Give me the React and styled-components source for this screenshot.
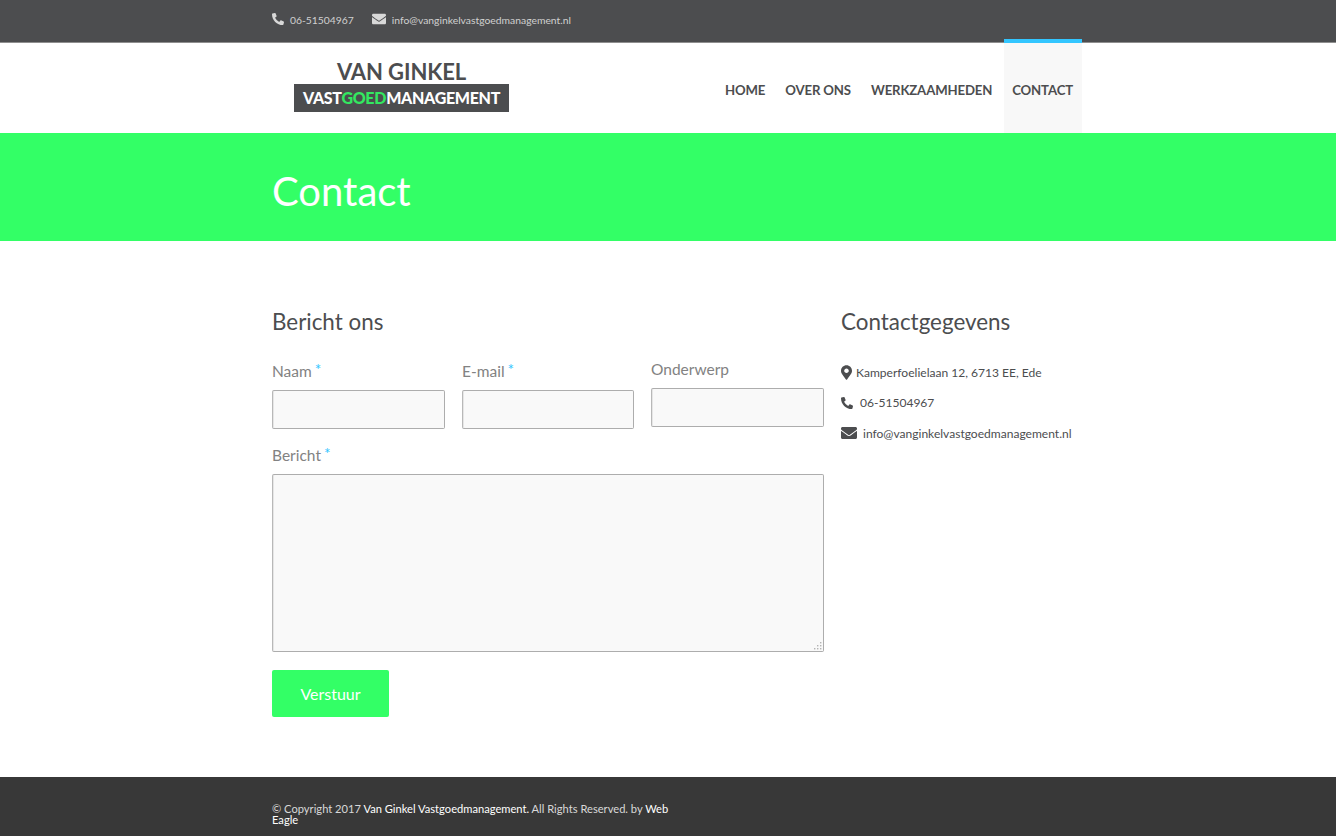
import React from 'react';
import styled, { createGlobalStyle } from 'styled-components';
import { FaPhoneAlt, FaEnvelope, FaMapMarkerAlt } from 'react-icons/fa';

const Global = createGlobalStyle`
  html, body { margin: 0; padding: 0; background: #fff; }
  body { font-family: Lato, "Open Sans", sans-serif; color: #4c4d4f; }
  * { box-sizing: border-box; }
`;
const Page = styled.div`
  min-height: 836px;
  display: flex;
  flex-direction: column;
`;
const Container = styled.div`
  width: 812px;
  margin-left: 272px;
`;
const TopBar = styled.div`
  height: 43px;
  background: #4c4d4f;
  border-bottom: 1px solid #8f8f8f;
`;
const TopInner = styled(Container)`
  display: flex;
  align-items: center;
  height: 39px;
  gap: 18px;
  font-size: 10.35px;
  color: #d0d0d0;
`;
const TopItem = styled.span`
  display: inline-flex;
  align-items: center;
  gap: ${p => p.$gap}px;
  svg { color: #d8d8d8; position: relative; top: -1px; }
`;
const Header = styled.header`
  height: 90px;
  background: #fff;
`;
const HeaderInner = styled(Container)`
  display: flex;
  justify-content: space-between;
  height: 90px;
`;
const Logo = styled.div`
  width: 215px;
  margin: 17px 0 0 22px;
  display: flex;
  flex-direction: column;
  align-items: center;
`;
const LogoTop = styled.div`
  font-size: 22px;
  font-weight: 700;
  line-height: 23px;
  height: 24px;
  color: #4c4d4f;
  letter-spacing: -0.1px;
`;
const LogoBar = styled.div`
  width: 215px;
  height: 28px;
  background: #4c4d4f;
  color: #fff;
  font-size: 16px;
  font-weight: 900;
  line-height: 28px;
  text-align: center;
  letter-spacing: -0.3px;
  white-space: nowrap;
  span { color: #33e860; }
`;
const Nav = styled.nav`
  display: flex;
  height: 94px;
  margin-top: -4px;
  margin-right: 2px;
`;
const NavItem = styled.a`
  display: flex;
  align-items: center;
  margin-left: ${p => (p.$active ? 2 : 0)}px;
  padding: ${p => (p.$active ? '3px 9px 0 8px' : '3px 10px 0')};
  font-size: 13.2px;
  font-weight: 700;
  color: #4c4d4f;
  white-space: nowrap;
  letter-spacing: -0.15px;
  background: ${p => (p.$active ? '#f8f8f8' : 'transparent')};
  border-top: 4px solid ${p => (p.$active ? '#33c6ff' : 'transparent')};
`;
const Hero = styled.div`
  height: 108px;
  background: #33ff66;
  display: flex;
  align-items: center;
  padding-top: 8px;
`;
const HeroTitle = styled.h1`
  margin: 0;
  font-size: 40px;
  font-weight: 400;
  color: #fff;
  line-height: 50px;
`;
const Main = styled.main`
  flex: 1;
`;
const Columns = styled(Container)`
  display: flex;
  gap: 17px;
  padding-top: 66px;
`;
const FormCol = styled.div`
  width: 552px;
`;
const InfoCol = styled.div`
  width: 243px;
`;
const SectionTitle = styled.h2`
  margin: 0;
  font-size: 22.4px;
  font-weight: 400;
  line-height: 30px;
  color: #4c4d4f;
`;
const FieldRow = styled.div`
  display: grid;
  grid-template-columns: 173px 172px 173px;
  gap: 17px;
  margin-top: 22px;
  align-items: start;
`;
const Field = styled.div`
  display: flex;
  flex-direction: column;
`;
const Label = styled.label`
  font-size: 15.5px;
  line-height: 20px;
  height: ${p => (p.$required ? 31 : 29)}px;
  padding-top: ${p => (p.$required ? 2 : 0)}px;
  color: #828282;
`;
const Star = styled.span`
  color: #33c6ff;
  margin-left: 3px;
  position: relative;
  top: -2px;
`;
const TextInput = styled.input`
  height: 39px;
  width: 100%;
  background: #f9f9f9;
  border: 1px solid #adadad;
  border-left-color: #b8b8b8;
  box-shadow: inset 1px 0 0 #e6e6e6;
  border-radius: 2px;
  outline: none;
`;
const MessageField = styled(Field)`
  margin-top: 14px;
`;
const MessageBox = styled.div`
  position: relative;
  width: 552px;
  height: 178px;
`;
const Message = styled.textarea`
  display: block;
  width: 100%;
  height: 100%;
  resize: none;
  background: #f9f9f9;
  border: 1px solid #adadad;
  border-left-color: #b8b8b8;
  box-shadow: inset 1px 0 0 #e6e6e6;
  border-radius: 2px;
  outline: none;
  margin: 0;
`;
const Grip = styled.svg`
  position: absolute;
  right: 2px;
  bottom: 2px;
  width: 8px;
  height: 8px;
`;
const Submit = styled.button`
  display: block;
  width: 117px;
  height: 47px;
  margin-top: 18px;
  background: #33ff66;
  color: #fff;
  border: none;
  border-radius: 2px;
  font-family: Lato, sans-serif;
  font-size: 16px;
`;
const InfoList = styled.div`
  margin-top: 20px;
  display: flex;
  flex-direction: column;
  font-size: 12.05px;
  color: #4c4d4f;
`;
const InfoRow = styled.div`
  display: flex;
  align-items: center;
  height: 30.5px;
  gap: ${p => p.$gap}px;
  white-space: nowrap;
  svg { color: #4c4d4f; flex: none; }
`;
const MarkerIcon = styled(FaMapMarkerAlt)`
  width: 11px;
  height: 15px;
`;
const Footer = styled.footer`
  height: 59px;
  background: #383838;
  padding-top: 26px;
`;
const FooterText = styled.div`
  width: 400px;
  margin-left: 272px;
  font-size: 11.15px;
  line-height: 11px;
  color: #d8d8d8;
  b { font-weight: 400; color: #fff; }
`;

export default function App() {
  return (
    <Page>
      <Global />
      <TopBar>
        <TopInner>
          <TopItem $gap={6}><FaPhoneAlt size={12} />06-51504967</TopItem>
          <TopItem $gap={6}><FaEnvelope size={14} />info@vanginkelvastgoedmanagement.nl</TopItem>
        </TopInner>
      </TopBar>
      <Header>
        <HeaderInner>
          <Logo>
            <LogoTop>VAN GINKEL</LogoTop>
            <LogoBar>VAST<span>GOED</span>MANAGEMENT</LogoBar>
          </Logo>
          <Nav>
            <NavItem>HOME</NavItem>
            <NavItem>OVER ONS</NavItem>
            <NavItem>WERKZAAMHEDEN</NavItem>
            <NavItem $active>CONTACT</NavItem>
          </Nav>
        </HeaderInner>
      </Header>
      <Hero>
        <Container><HeroTitle>Contact</HeroTitle></Container>
      </Hero>
      <Main>
        <Columns>
          <FormCol>
            <SectionTitle>Bericht ons</SectionTitle>
            <FieldRow>
              <Field>
                <Label $required>Naam<Star>*</Star></Label>
                <TextInput />
              </Field>
              <Field>
                <Label $required>E-mail<Star>*</Star></Label>
                <TextInput />
              </Field>
              <Field>
                <Label>Onderwerp</Label>
                <TextInput />
              </Field>
            </FieldRow>
            <MessageField>
              <Label $required>Bericht<Star>*</Star></Label>
              <MessageBox>
                <Message />
                <Grip viewBox="0 0 8 8" fill="#b4b4b4">
                  <rect x="6" y="0" width="1.4" height="1.4" />
                  <rect x="6" y="3" width="1.4" height="1.4" />
                  <rect x="3" y="3" width="1.4" height="1.4" />
                  <rect x="6" y="6" width="1.4" height="1.4" />
                  <rect x="3" y="6" width="1.4" height="1.4" />
                  <rect x="0" y="6" width="1.4" height="1.4" />
                </Grip>
              </MessageBox>
            </MessageField>
            <Submit>Verstuur</Submit>
          </FormCol>
          <InfoCol>
            <SectionTitle>Contactgegevens</SectionTitle>
            <InfoList>
              <InfoRow $gap={4}><MarkerIcon />Kamperfoelielaan 12, 6713 EE, Ede</InfoRow>
              <InfoRow $gap={7}><FaPhoneAlt size={12} />06-51504967</InfoRow>
              <InfoRow $gap={6}><FaEnvelope size={16} />info@vanginkelvastgoedmanagement.nl</InfoRow>
            </InfoList>
          </InfoCol>
        </Columns>
      </Main>
      <Footer>
        <FooterText>© Copyright 2017 <b>Van Ginkel Vastgoedmanagement.</b> All Rights Reserved. by <b>Web Eagle</b></FooterText>
      </Footer>
    </Page>
  );
}
